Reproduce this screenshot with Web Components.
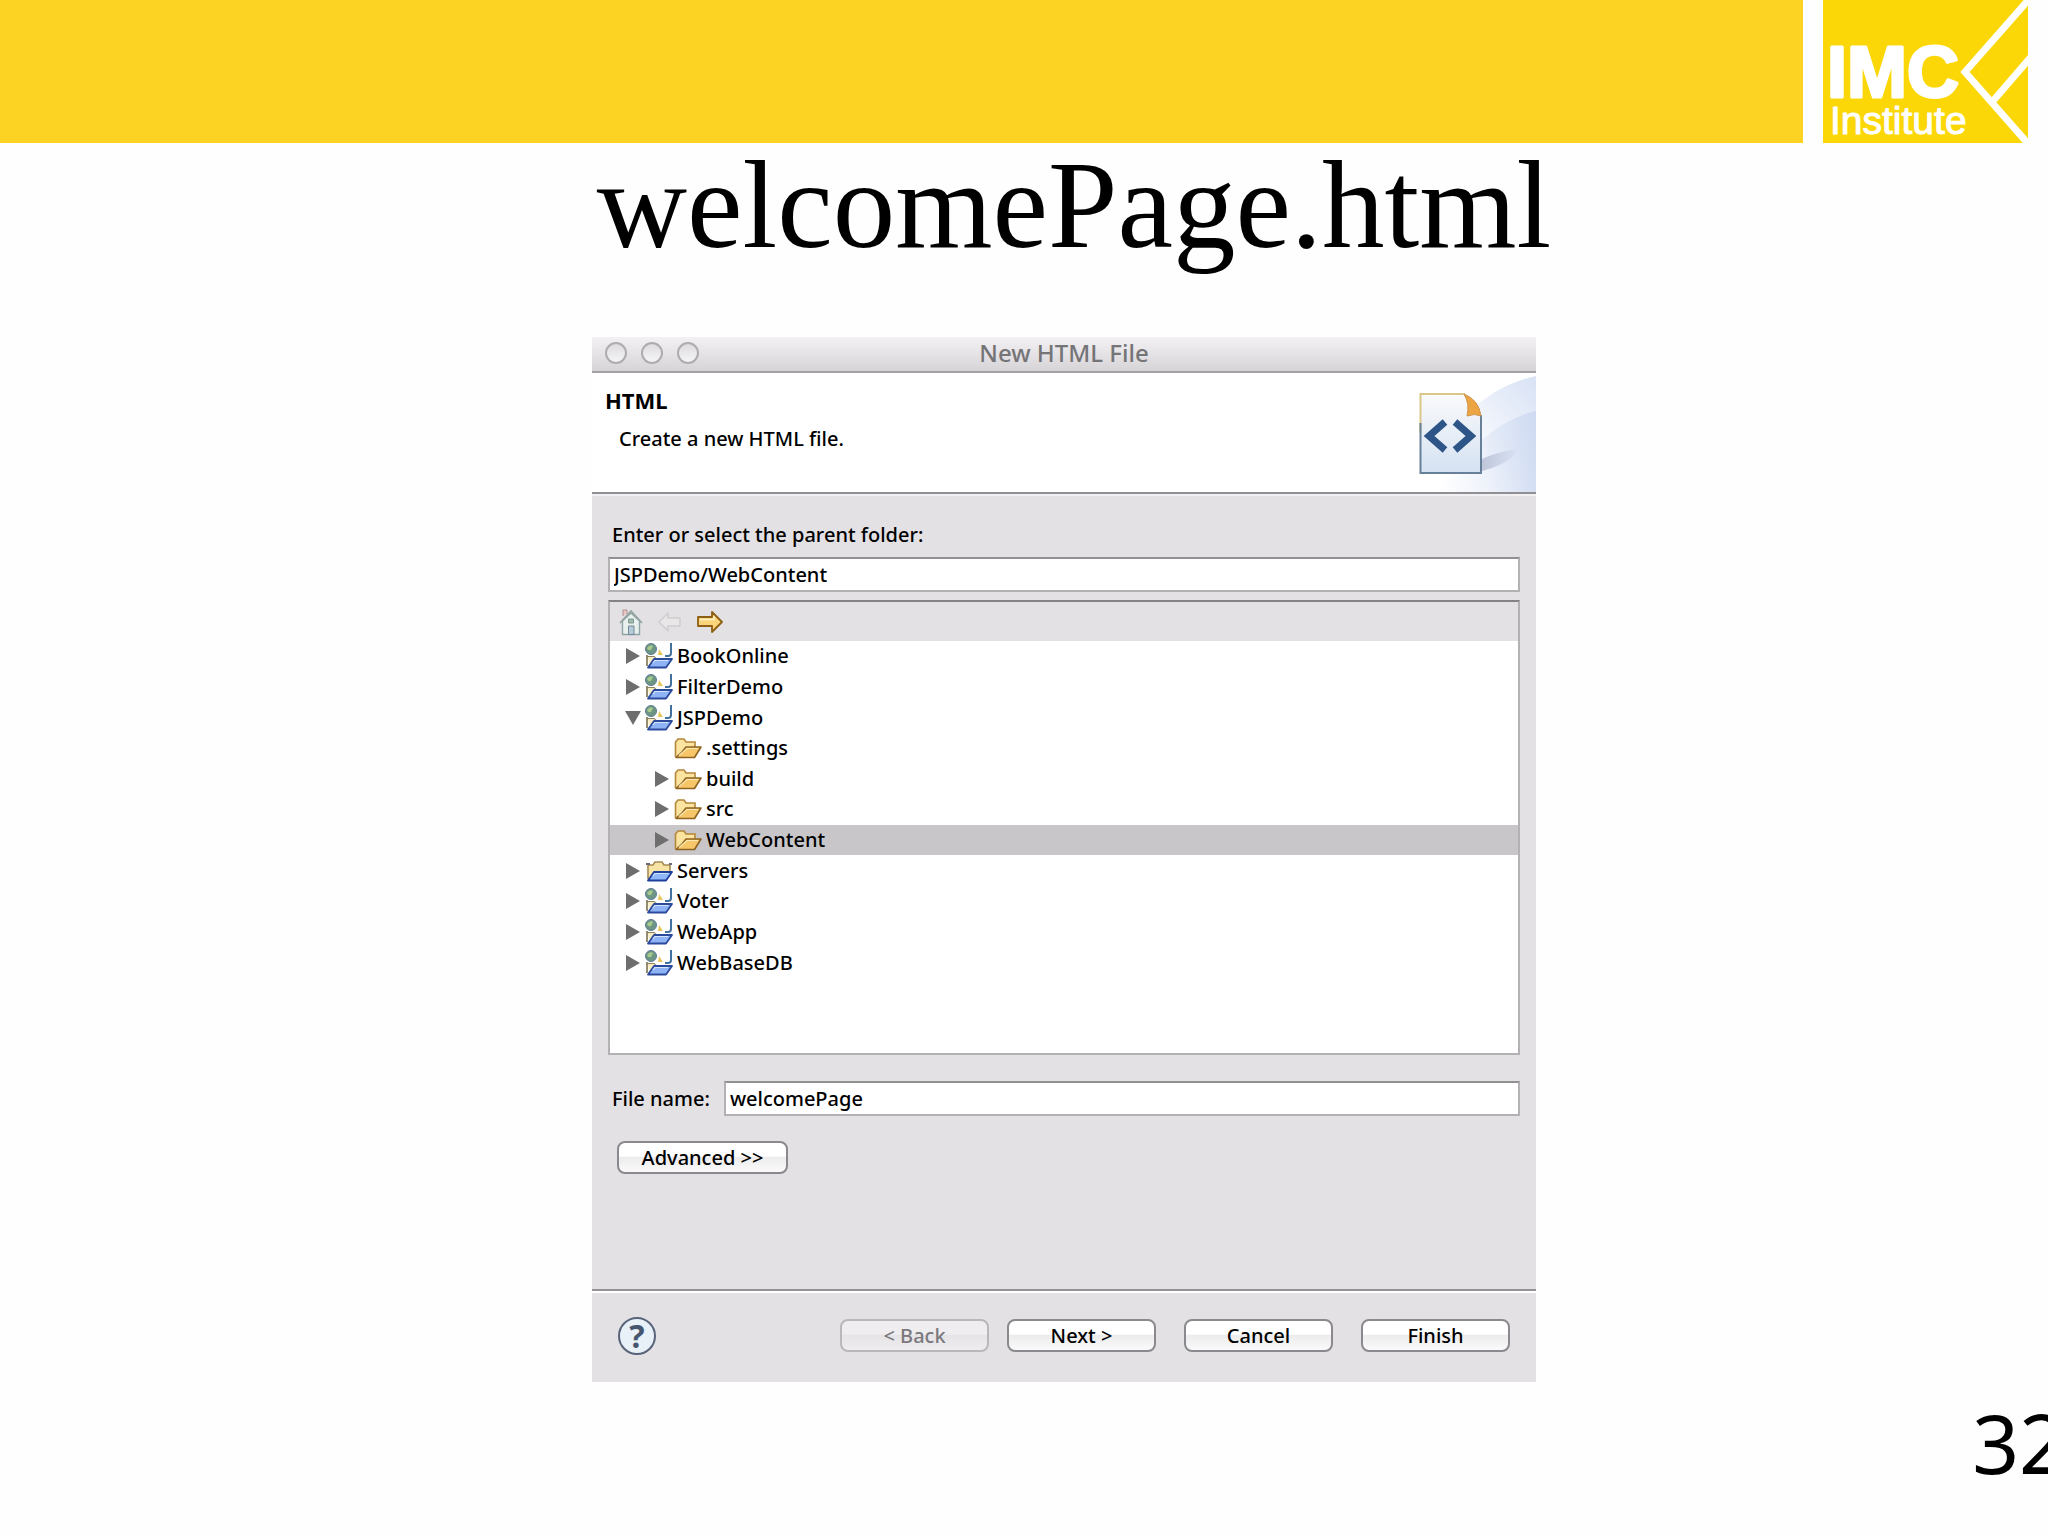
<!DOCTYPE html>
<html lang="en">
<head>
<meta charset="utf-8">
<title>welcomePage.html</title>
<style>
  body { margin:0; background:#fefefe; color:#000; font-family:"Noto Sans", "Open Sans", sans-serif; overflow:hidden; }
</style>
</head>
<body>
<deck-slide heading="welcomePage.html" page="32">
  <wizard-dialog caption="New HTML File" heading="HTML" description="Create a new HTML file.">
    <form-field label="Enter or select the parent folder:" value="JSPDemo/WebContent" stacked></form-field>
    <folder-tree>
      <tree-row icon="web" state="closed">BookOnline</tree-row>
      <tree-row icon="web" state="closed">FilterDemo</tree-row>
      <tree-row icon="web" state="open">JSPDemo</tree-row>
      <tree-row icon="folder" level="2">.settings</tree-row>
      <tree-row icon="folder" level="2" state="closed">build</tree-row>
      <tree-row icon="folder" level="2" state="closed">src</tree-row>
      <tree-row icon="folder" level="2" state="closed" selected>WebContent</tree-row>
      <tree-row icon="project" state="closed">Servers</tree-row>
      <tree-row icon="web" state="closed">Voter</tree-row>
      <tree-row icon="web" state="closed">WebApp</tree-row>
      <tree-row icon="web" state="closed">WebBaseDB</tree-row>
    </folder-tree>
    <form-field label="File name:" value="welcomePage"></form-field>
    <push-button wide>Advanced &gt;&gt;</push-button>
    <push-button slot="steps" disabled>&lt; Back</push-button>
    <push-button slot="steps">Next &gt;</push-button>
    <push-button slot="actions">Cancel</push-button>
    <push-button slot="actions">Finish</push-button>
  </wizard-dialog>
</deck-slide>

<script>
const ICONS = {
  folder: `
    <svg width="28" height="22" viewBox="0 0 28 22">
      <path d="M1.5 20V5L4 2h6l2 3h9v5" fill="#fbe3a0" stroke="#b4883a" stroke-width="1.6"/>
      <path d="M2 20.500L8 15l4-5h15l-6.500 10.500z" fill="#f6c668" stroke="#8f6421" stroke-width="1.6" stroke-linejoin="round"/>
      <path d="M5 18.500l8-7h11" fill="none" stroke="#fde9b4" stroke-width="1.2"/>
    </svg>`,
  project: `
    <svg width="28" height="22" viewBox="0 0 28 22">
      <path d="M3 19V5h5l2-3h7l2 3h6v7" fill="#f7e3a4" stroke="#a58b55" stroke-width="1.6"/>
      <path d="M1 4h4M24 4h3" stroke="#6b6b78" stroke-width="2"/>
      <path d="M3 20.500L9 12h18l-6 8.500z" fill="#8fb8f8" stroke="#1f3f9c" stroke-width="1.8" stroke-linejoin="round"/>
      <path d="M8 16l2-2.500h13" fill="none" stroke="#cfe2ff" stroke-width="1.2"/>
    </svg>`,
  web: `
    <svg width="28" height="26" viewBox="0 0 28 26">
      <path d="M2 12v11M2 14h7l3 3" fill="none" stroke="#8a8263" stroke-width="1.8"/>
      <path d="M3 14h6l3 3h6v3H4z" fill="#f8ecc0"/>
      <path d="M14 6l4 6h-5z" fill="#e8c75a"/>
      <circle cx="6" cy="6" r="5.500" fill="#6d9583" stroke="#5f7c98"/>
      <path d="M2 5q3-4 6-2l-2 4q-3 1-4-2z" fill="#a8c98c"/>
      <path d="M20 13h3q3 0 3-3V0" fill="none" stroke="#41719f" stroke-width="2"/>
      <path d="M3 24.500L9 16h18l-6 8.500z" fill="#8fb4f6" stroke="#2c4a9c" stroke-width="1.8" stroke-linejoin="round"/>
      <path d="M8 20l2-2.500h13" fill="none" stroke="#d4e4ff" stroke-width="1.2"/>
    </svg>`,
  closed: '<svg width="14" height="16" viewBox="0 0 14 16"><path d="M0 0l14 8-14 8z" fill="#6e6e6e"/></svg>',
  open: '<svg width="16" height="14" viewBox="0 0 16 14"><path d="M0 0h16L8 14z" fill="#6e6e6e"/></svg>',
  home: `
    <svg width="24" height="28" viewBox="0 0 24 28">
      <path d="M4 8V2h4v4" fill="#e9c9c4" stroke="#b08f8f"/>
      <path d="M3.500 13v13.500h17V13L12 5z" fill="#e9f1ee" stroke="#8fa5a5" stroke-width="1.400"/>
      <path d="M1 15L12 3l11 12" fill="none" stroke="#93a4a0" stroke-width="1.800"/>
      <path d="M9.500 18h5.500v8.500H9.500z" fill="#b6cbd6" stroke="#71899a"/>
      <path d="M9.500 11h5v4h-5z" fill="#9fb9aa" stroke="#7f9a8e"/>
    </svg>`,
  back: '<svg width="26" height="24" viewBox="0 0 26 24"><path d="M2 12L11 3v5h12v8H11v5z" fill="#e9e7e8" stroke="#cfcdcf" stroke-width="1.500" stroke-linejoin="round"/></svg>',
  forward: `
    <svg width="26" height="24" viewBox="0 0 26 24">
      <path d="M25 12L15 2v5H1v9h14v6z" fill="#fbd57b" stroke="#8d5f12" stroke-width="1.800" stroke-linejoin="round"/>
      <path d="M3 9.500h14V6" fill="none" stroke="#fff1c4" stroke-width="1.500"/>
    </svg>`,
  banner: `
    <svg width="150" height="119" viewBox="0 0 150 119">
      <defs>
        <linearGradient id="sky" x1="0" y1="1" x2="1" y2="0">
          <stop offset="0.300" stop-color="#fff"/><stop offset="1" stop-color="#d8e2f5"/>
        </linearGradient>
        <linearGradient id="glow" x1="0" y1="0" x2="1" y2="0">
          <stop offset="0" stop-color="#dbe4f5" stop-opacity="0"/><stop offset="1" stop-color="#c6d4ef"/>
        </linearGradient>
        <linearGradient id="sheet" x1="0" y1="0" x2="0" y2="1">
          <stop offset="0" stop-color="#fafafb"/><stop offset="1" stop-color="#d5e2f2"/>
        </linearGradient>
        <linearGradient id="shade" x1="0" y1="0" x2="1" y2="0">
          <stop offset="0" stop-color="#b4bcd3"/><stop offset="1" stop-color="#d9e1f3"/>
        </linearGradient>
      </defs>
      <path d="M40 119C60 50 100 14 150 3v116z" fill="url(#sky)"/>
      <path d="M50 119Q98 50 150 38v81z" fill="url(#glow)" opacity=".7"/>
      <path d="M96 98V86q14-7 36-10-6 14-36 22z" fill="url(#shade)" opacity=".8"/>
      <path d="M34.500 21H78l17 21v58H34.500z" fill="url(#sheet)"/>
      <path d="M34.500 60V21H79" fill="none" stroke="#d9c78c" stroke-width="2"/>
      <path d="M34.500 50v50H95V42" fill="none" stroke="#66809a" stroke-width="2"/>
      <path d="M78 21q15 6 17 22-6-3-14 0 3-12-3-22z" fill="#eda443" stroke="#cf934a"/>
      <path d="M59 49L43 63l16 14M69 49l16 14-16 14" fill="none" stroke="#2d5588" stroke-width="7"/>
    </svg>`
};

// Base class: renders the template once the element is attached
class ShadowElement extends HTMLElement {
  connectedCallback() {
    if (this.shadowRoot) return;
    this.attachShadow({ mode: 'open' });
    this.shadowRoot.innerHTML = this.template();
  }

  attr(name) {
    return this.getAttribute(name) || '';
  }
}

class BrandLogo extends ShadowElement {
  template() {
    return `
      <style>
        :host { display:block; }
        svg { display:block; }
        text { fill:#fff; stroke:#fff; stroke-linejoin:round; }
        .name { font:bold 72px "Liberation Sans", sans-serif; stroke-width:3px; }
        .sub { font:39px "Liberation Sans", sans-serif; stroke-width:1px; }
      </style>
      <svg width="205" height="143" viewBox="0 0 205 143" role="img" aria-label="IMC Institute">
        <rect width="205" height="143" fill="#fbd708"/>
        <path d="M208-3L142 72l66 75M170 101l38-44" fill="none" stroke="#fff" stroke-width="7"/>
        <text class="name" x="4" y="97">IMC</text>
        <text class="sub" x="7" y="134">Institute</text>
      </svg>
    `;
  }
}

class DeckSlide extends ShadowElement {
  template() {
    return `
      <style>
        :host { display:flex; flex-direction:column; min-height:100vh; }
        header { display:flex; gap:20px; padding-right:20px; }
        .bar { flex:1; background:#fcd323; }
        h1 { margin:0; padding-left:100px; font:125px/124px "Liberation Serif", serif; text-align:center; }
        .content { display:grid; grid-template-columns:592fr 944fr 512fr; padding-top:70px; }
        ::slotted(*) { grid-column:2; }
        footer { display:flex; justify-content:flex-end; margin-right:-18px; font-size:82px; line-height:120px; }
      </style>
      <header><div class="bar"></div><brand-logo></brand-logo></header>
      <h1>${this.attr('heading')}</h1>
      <main class="content"><slot></slot></main>
      <footer>${this.attr('page')}</footer>
    `;
  }
}

class WizardDialog extends ShadowElement {
  template() {
    return `
      <style>
        :host { display:block; background:#e3e1e4; font-size:20px; font-weight:500; line-height:28px; }
        .titlebar { display:grid; grid-template-columns:1fr auto 1fr; align-items:center; height:36px; padding:0 13px 2px; border-bottom:2px solid #a3a1a4; background:linear-gradient(#f3f1f3, #d6d4d7); color:#757477; box-sizing:border-box; }
        .titlebar span { font-size:24px; }
        .lights { display:flex; gap:14px; }
        .lights i { width:22px; height:22px; box-sizing:border-box; border:2px solid #aeacaf; border-radius:50%; background:linear-gradient(#dddbde, #f6f5f6); }
        .banner { display:flex; justify-content:space-between; height:119px; background:#fff; border-bottom:2px solid #918f93; }
        .banner h2 { margin:0; padding:13px 0 0 13px; font-size:22px; line-height:28px; }
        .banner p { margin:0; padding:11px 0 0 27px; }
        .banner svg { display:block; }
        .body { display:flex; flex-direction:column; padding:25px 16px 0; border-top:2px solid #f1f0f2; }
        .foot { display:flex; align-items:center; gap:28px; margin-top:115px; padding:0 26px 2px; height:89px; border-top:2px solid #959397; box-shadow:inset 0 2px #fff; }
        .steps { display:flex; gap:18px; margin-left:auto; }
        .help { width:38px; height:38px; padding:0; border:2px solid #58647a; border-radius:50%; background:#e8f0f8; color:#46566f; font:bold 32px/34px "Noto Sans", sans-serif; }
      </style>
      <div class="titlebar">
        <div class="lights"><i></i><i></i><i></i></div>
        <span>${this.attr('caption')}</span>
      </div>
      <div class="banner">
        <div><h2>${this.attr('heading')}</h2><p>${this.attr('description')}</p></div>
        ${ICONS.banner}
      </div>
      <div class="body"><slot></slot></div>
      <div class="foot">
        <button class="help" type="button" aria-label="Help">?</button>
        <div class="steps"><slot name="steps"></slot></div>
        <slot name="actions"></slot>
      </div>
    `;
  }
}

class FormField extends ShadowElement {
  template() {
    return `
      <style>
        :host { display:flex; align-items:center; gap:14px; margin-top:26px; }
        :host([stacked]) { flex-direction:column; align-items:stretch; gap:8px; margin-top:0; }
        label { padding-left:4px; }
        input { flex:1; min-width:0; height:35px; box-sizing:border-box; padding:0 4px; border:2px solid #b3b1b4; border-top-color:#929093; background:#fff; color:#000; font:inherit; }
        :host([stacked]) input { flex:none; }
      </style>
      <label for="box">${this.attr('label')}</label>
      <input id="box" type="text" value="${this.attr('value')}">
    `;
  }
}

class FolderTree extends ShadowElement {
  template() {
    return `
      <style>
        :host { display:block; margin-top:8px; border:2px solid #b3b1b4; border-top-color:#858387; background:#fff; }
        .toolbar { display:flex; align-items:center; gap:14px; height:39px; padding-left:9px; background:#e3e1e4; }
        button { display:block; padding:0; border:0; background:none; }
        svg { display:block; }
        .rows { display:grid; grid-auto-rows:1fr; height:337px; padding-bottom:75px; }
      </style>
      <div class="toolbar">
        <button type="button" aria-label="Home">${ICONS.home}</button>
        <button type="button" aria-label="Back" disabled>${ICONS.back}</button>
        <button type="button" aria-label="Forward">${ICONS.forward}</button>
      </div>
      <div class="rows" role="tree"><slot></slot></div>
    `;
  }
}

class TreeRow extends ShadowElement {
  connectedCallback() {
    super.connectedCallback();
    this.setAttribute('role', 'treeitem');
  }

  template() {
    return `
      <style>
        :host { display:flex; align-items:center; padding-left:15px; }
        :host([level="2"]) { padding-left:44px; }
        :host([selected]) { background:#c8c6c9; }
        .twisty { display:flex; justify-content:center; width:16px; margin-right:4px; }
        .icon { display:flex; width:28px; margin-right:4px; }
      </style>
      <span class="twisty">${ICONS[this.attr('state')] || ''}</span>
      <span class="icon">${ICONS[this.attr('icon')]}</span>
      <slot></slot>
    `;
  }
}

class PushButton extends ShadowElement {
  template() {
    return `
      <style>
        :host { display:block; width:149px; }
        :host([wide]) { width:171px; margin:25px 0 0 9px; }
        button { width:100%; height:33px; padding:0; border:2px solid #8b898d; border-radius:8px; background:linear-gradient(#fff 45%, #ececed 50%, #fafafa); color:#000; font:inherit; line-height:28px; }
        button:disabled { border-color:#b9b7bb; background:linear-gradient(#efedf0 45%, #e6e4e7 50%, #eeecef); color:#7b797d; }
      </style>
      <button type="button" ${this.hasAttribute('disabled') ? 'disabled' : ''}><slot></slot></button>
    `;
  }
}

customElements.define('brand-logo', BrandLogo);
customElements.define('deck-slide', DeckSlide);
customElements.define('wizard-dialog', WizardDialog);
customElements.define('form-field', FormField);
customElements.define('folder-tree', FolderTree);
customElements.define('tree-row', TreeRow);
customElements.define('push-button', PushButton);
</script>
</body>
</html>
